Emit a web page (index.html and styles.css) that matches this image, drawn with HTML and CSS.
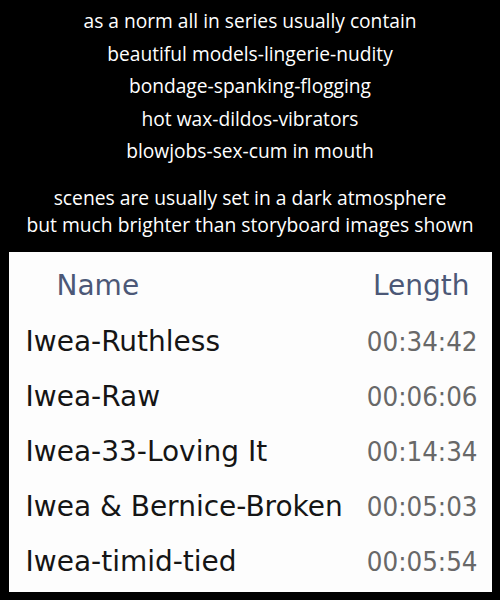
FILE: index.html
```html
<!DOCTYPE html>
<html>
<head>
<meta charset="utf-8">
<link rel="stylesheet" href="styles.css">
</head>
<body>
<div class="page">
  <div class="intro">
    <p class="line">as a norm all in series usually contain</p>
    <p class="line">beautiful models-lingerie-nudity</p>
    <p class="line">bondage-spanking-flogging</p>
    <p class="line">hot wax-dildos-vibrators</p>
    <p class="line">blowjobs-sex-cum in mouth</p>
  </div>
  <div class="note">
    <p class="nline">scenes are usually set in a dark atmosphere</p>
    <p class="nline">but much brighter than storyboard images shown</p>
  </div>
  <div class="panel">
    <div class="row head">
      <span class="name hname">Name</span>
      <span class="len hlen">Length</span>
    </div>
    <div class="row"><span class="name">Iwea-Ruthless</span><span class="len">00:34:42</span></div>
    <div class="row"><span class="name">Iwea-Raw</span><span class="len">00:06:06</span></div>
    <div class="row"><span class="name">Iwea-33-Loving It</span><span class="len">00:14:34</span></div>
    <div class="row"><span class="name">Iwea &amp; Bernice-Broken</span><span class="len">00:05:03</span></div>
    <div class="row"><span class="name">Iwea-timid-tied</span><span class="len">00:05:54</span></div>
  </div>
</div>
</body>
</html>
```
FILE: styles.css
```css
html, body {
  margin: 0;
  padding: 0;
  background: #000;
}
.page {
  width: 500px;
  height: 600px;
  background: #000;
  display: flex;
  flex-direction: column;
  align-items: center;
  font-family: "Open Sans", "Noto Sans", sans-serif;
  color: #fff;
}
.intro {
  padding-top: 5px;
  display: flex;
  flex-direction: column;
  align-items: center;
}
.line {
  margin: 0;
  font-size: 19.2px;
  line-height: 32.5px;
}
.note {
  margin-top: 16px;
  display: flex;
  flex-direction: column;
  align-items: center;
}
.nline {
  margin: 0;
  font-size: 19.3px;
  line-height: 27px;
}
.panel {
  margin-top: 14px;
  width: 483px;
  height: 340px;
  background: #fdfdfd;
  box-sizing: border-box;
  padding: 6px 14px 0 17px;
  font-family: "DejaVu Sans", sans-serif;
}
.row {
  display: flex;
  justify-content: space-between;
  align-items: center;
  height: 55px;
}
.head {
  height: 56px;
}
.name {
  font-size: 28px;
  color: #151515;
}
.len {
  font-family: "DejaVu Sans Condensed", "DejaVu Sans", sans-serif;
  font-size: 27.4px;
  color: #686868;
}
.hname {
  font-size: 28px;
  color: #4c5877;
  padding-left: 31px;
}
.hlen {
  font-family: "DejaVu Sans", sans-serif;
  font-size: 28px;
  color: #4c5877;
  padding-right: 8px;
}
```
